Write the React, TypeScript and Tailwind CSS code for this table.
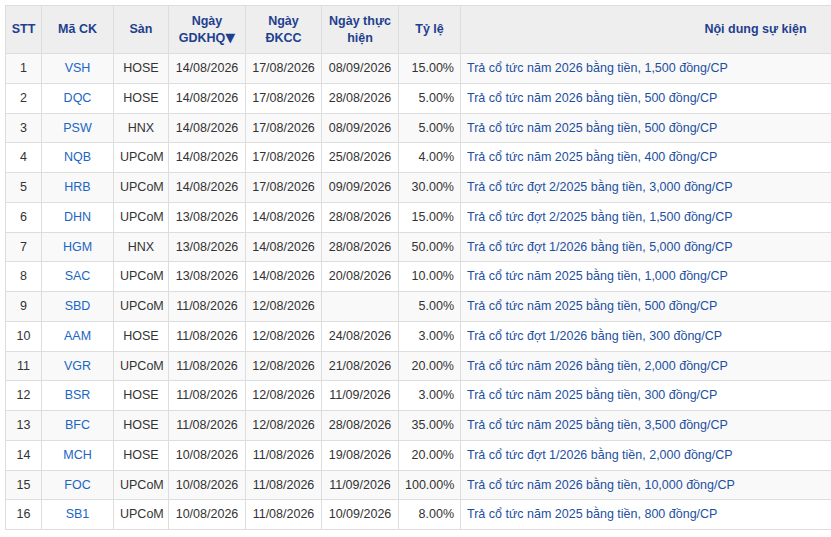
type EventRow = {
  code: string
  exchange: string
  exDate: string
  recordDate: string
  payDate: string
  ratio: string
  content: string
}

const rows: EventRow[] = [
  { code: 'VSH', exchange: 'HOSE', exDate: '14/08/2026', recordDate: '17/08/2026', payDate: '08/09/2026', ratio: '15.00%', content: 'Trả cổ tức năm 2026 bằng tiền, 1,500 đồng/CP' },
  { code: 'DQC', exchange: 'HOSE', exDate: '14/08/2026', recordDate: '17/08/2026', payDate: '28/08/2026', ratio: '5.00%', content: 'Trả cổ tức năm 2026 bằng tiền, 500 đồng/CP' },
  { code: 'PSW', exchange: 'HNX', exDate: '14/08/2026', recordDate: '17/08/2026', payDate: '08/09/2026', ratio: '5.00%', content: 'Trả cổ tức năm 2025 bằng tiền, 500 đồng/CP' },
  { code: 'NQB', exchange: 'UPCoM', exDate: '14/08/2026', recordDate: '17/08/2026', payDate: '25/08/2026', ratio: '4.00%', content: 'Trả cổ tức năm 2025 bằng tiền, 400 đồng/CP' },
  { code: 'HRB', exchange: 'UPCoM', exDate: '14/08/2026', recordDate: '17/08/2026', payDate: '09/09/2026', ratio: '30.00%', content: 'Trả cổ tức đợt 2/2025 bằng tiền, 3,000 đồng/CP' },
  { code: 'DHN', exchange: 'UPCoM', exDate: '13/08/2026', recordDate: '14/08/2026', payDate: '28/08/2026', ratio: '15.00%', content: 'Trả cổ tức đợt 2/2025 bằng tiền, 1,500 đồng/CP' },
  { code: 'HGM', exchange: 'HNX', exDate: '13/08/2026', recordDate: '14/08/2026', payDate: '28/08/2026', ratio: '50.00%', content: 'Trả cổ tức đợt 1/2026 bằng tiền, 5,000 đồng/CP' },
  { code: 'SAC', exchange: 'UPCoM', exDate: '13/08/2026', recordDate: '14/08/2026', payDate: '20/08/2026', ratio: '10.00%', content: 'Trả cổ tức năm 2025 bằng tiền, 1,000 đồng/CP' },
  { code: 'SBD', exchange: 'UPCoM', exDate: '11/08/2026', recordDate: '12/08/2026', payDate: '', ratio: '5.00%', content: 'Trả cổ tức năm 2025 bằng tiền, 500 đồng/CP' },
  { code: 'AAM', exchange: 'HOSE', exDate: '11/08/2026', recordDate: '12/08/2026', payDate: '24/08/2026', ratio: '3.00%', content: 'Trả cổ tức đợt 1/2026 bằng tiền, 300 đồng/CP' },
  { code: 'VGR', exchange: 'UPCoM', exDate: '11/08/2026', recordDate: '12/08/2026', payDate: '21/08/2026', ratio: '20.00%', content: 'Trả cổ tức năm 2026 bằng tiền, 2,000 đồng/CP' },
  { code: 'BSR', exchange: 'HOSE', exDate: '11/08/2026', recordDate: '12/08/2026', payDate: '11/09/2026', ratio: '3.00%', content: 'Trả cổ tức năm 2025 bằng tiền, 300 đồng/CP' },
  { code: 'BFC', exchange: 'HOSE', exDate: '11/08/2026', recordDate: '12/08/2026', payDate: '28/08/2026', ratio: '35.00%', content: 'Trả cổ tức năm 2025 bằng tiền, 3,500 đồng/CP' },
  { code: 'MCH', exchange: 'HOSE', exDate: '10/08/2026', recordDate: '11/08/2026', payDate: '19/08/2026', ratio: '20.00%', content: 'Trả cổ tức đợt 1/2026 bằng tiền, 2,000 đồng/CP' },
  { code: 'FOC', exchange: 'UPCoM', exDate: '10/08/2026', recordDate: '11/08/2026', payDate: '11/09/2026', ratio: '100.00%', content: 'Trả cổ tức năm 2026 bằng tiền, 10,000 đồng/CP' },
  { code: 'SB1', exchange: 'UPCoM', exDate: '10/08/2026', recordDate: '11/08/2026', payDate: '10/09/2026', ratio: '8.00%', content: 'Trả cổ tức năm 2025 bằng tiền, 800 đồng/CP' },
]

const th = 'border border-[#dddddd] px-1 text-center align-middle font-bold leading-[17px] text-[#1f3f8f]'
const td = 'border border-[#dddddd] px-1.5 align-middle'

export default function App() {
  return (
    <div className="h-[537px] w-[831px] overflow-hidden bg-white p-[5px] font-['Liberation_Sans',Arial,sans-serif] text-[12.5px] text-[#333333]">
      <table className="w-[1045px] table-fixed border-collapse">
        <colgroup>
          <col className="w-[36px]" />
          <col className="w-[72px]" />
          <col className="w-[55px]" />
          <col className="w-[77px]" />
          <col className="w-[76px]" />
          <col className="w-[77px]" />
          <col className="w-[62px]" />
          <col className="w-[590px]" />
        </colgroup>
        <thead>
          <tr className="h-[48px] bg-[#eeeeee]">
            <th className={th}>STT</th>
            <th className={th}>Mã CK</th>
            <th className={th}>Sàn</th>
            <th className={th}>
              Ngày
              <br />
              GDKHQ
              <span className="font-['DejaVu_Sans',sans-serif] text-[13px] leading-none">▼</span>
            </th>
            <th className={th}>
              Ngày
              <br />
              ĐKCC
            </th>
            <th className={th}>
              Ngày thực
              <br />
              hiện
            </th>
            <th className={th}>Tỷ lệ</th>
            <th className={th}>Nội dung sự kiện</th>
          </tr>
        </thead>
        <tbody>
          {rows.map((row, index) => (
            <tr
              className={index % 2 === 0 ? 'h-[29.75px] bg-[#f9f9f9]' : 'h-[29.75px] bg-white'}
              key={row.code}
            >
              <td className={`${td} text-center`}>{index + 1}</td>
              <td className={`${td} text-center text-[#1a66c2]`}>{row.code}</td>
              <td className={`${td} text-center`}>{row.exchange}</td>
              <td className={`${td} text-center`}>{row.exDate}</td>
              <td className={`${td} text-center`}>{row.recordDate}</td>
              <td className={`${td} text-center`}>{row.payDate}</td>
              <td className={`${td} text-right`}>{row.ratio}</td>
              <td className={`${td} text-left text-[#1d4f9f]`}>{row.content}</td>
            </tr>
          ))}
        </tbody>
      </table>
    </div>
  )
}
